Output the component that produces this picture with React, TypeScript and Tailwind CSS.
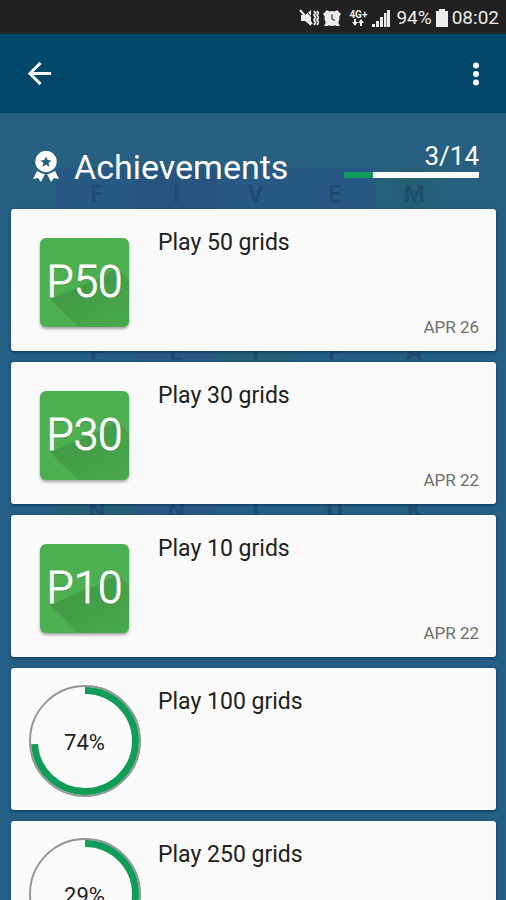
import { MdArrowBack } from 'react-icons/md'

type Achievement = {
  title: string
  date?: string
  badge?: string
  percent?: number
}

const ACHIEVEMENTS: Achievement[] = [
  { title: 'Play 50 grids', badge: 'P50', date: 'APR 26' },
  { title: 'Play 30 grids', badge: 'P30', date: 'APR 22' },
  { title: 'Play 10 grids', badge: 'P10', date: 'APR 22' },
  { title: 'Play 100 grids', percent: 74 },
  { title: 'Play 250 grids', percent: 29 },
]

const BLUE = 'bg-[#285984]'
const GREEN = 'bg-[#245f75]'

const LETTER_ROWS = [
  { letters: 'FIVEM', tints: [BLUE, 'bg-[#27547f]', BLUE, BLUE, 'bg-linear-to-r from-[#27607f] via-[#245f70] to-[#27607f]'] },
  { letters: 'FEIFA', tints: ['', BLUE, GREEN, '', ''] },
  { letters: 'NNIOK', tints: [GREEN, BLUE, '', '', ''] },
]

function StatusBar() {
  return (
    <div className="flex h-[34px] shrink-0 items-center justify-end bg-[#212121] pt-[2px] pr-[7px] text-[19px] text-[#ececec]">
      <svg className="mr-1 h-5 w-5" viewBox="0 0 20 20" fill="currentColor">
        <path d="M2 7h4l6-5v16l-6-5H2z" />
        <path d="M1 2l12 14" stroke="currentColor" strokeWidth="2" />
        <path d="M6 1l8 10" stroke="#212121" strokeWidth="1" />
        <path d="M15 3l1.500 2-1.500 2 1.500 2.500L15 12l1.500 2-1.500 3M18 3l1.500 2L18 7l1.500 2.500L18 12l1.500 2-1.500 3" fill="none" stroke="currentColor" strokeWidth="1.800" />
      </svg>
      <svg className="mr-[7px] h-[18px] w-[18px]" viewBox="0 0 18 18" fill="currentColor">
        <path d="M0 5l4-4 3 2-5 5zM18 5l-4-4-3 2 5 5zM3 13l-2 4h4l2-2zM15 13l2 4h-4l-2-2z" />
        <circle cx="9" cy="9.500" r="7.500" />
        <path d="M9 5.500v4.500l3 1.500" fill="none" stroke="#444" strokeWidth="1.300" />
      </svg>
      <div className="mr-1 flex w-5 flex-col items-center">
        <span className="text-[10px] font-bold leading-[9px]">4G+</span>
        <svg className="h-[7px] w-3" viewBox="0 0 12 7" fill="currentColor">
          <path d="M2 0h2v3h2L3 7 0 3h2zM8 7h2V4h2L9 0 6 4h2z" />
        </svg>
      </div>
      <svg className="mr-[6px] h-[18px] w-[18px]" viewBox="0 0 18 18" fill="currentColor">
        <path d="M0 15h3v3H0zM4 12h3v6H4zM8 8h3v10H8zM12 4h2.500v14H12zM15 1h3v17h-3z" />
      </svg>
      <span>94%</span>
      <svg className="mx-1 h-[18px] w-3" viewBox="0 0 12 18" fill="currentColor">
        <path d="M3 0h6v2h3v16H0V2h3z" />
      </svg>
      <span>08:02</span>
    </div>
  )
}

// Game board that shows through behind the cards
function LetterGrid() {
  return (
    <div aria-hidden="true" className="absolute inset-x-0 top-[41px] flex flex-col gap-[79px] pr-[52px] pl-[57px] text-2xl font-bold text-[#1c4c70]">
      {LETTER_ROWS.map((row) => (
        <div key={row.letters} className="grid h-[79px] grid-cols-5 items-center">
          {row.letters.split('').map((letter, i) => (
            <div key={i} className={`flex h-[52px] items-center justify-center leading-5 ${row.tints[i]}`}>
              {letter}
            </div>
          ))}
        </div>
      ))}
    </div>
  )
}

function RibbonIcon() {
  return (
    <svg className="h-8 w-[28px]" viewBox="0 0 28 32" fill="#fff">
      <path d="M5 20l8 3-4 8-3-4-5 1zM23 20l-8 3 4 8 3-4 5 1z" />
      <circle cx="14" cy="11" r="12" fill="#27607f" />
      <circle cx="14" cy="10.500" r="10.700" />
      <path d="M14 5.500l1.600 3.600 3.900.3-3 2.600 1 3.800-3.500-2.100-3.500 2.100 1-3.800-3-2.600 3.900-.3z" fill="#27607f" />
    </svg>
  )
}

function Badge({ label }: { label: string }) {
  return (
    <div className="relative flex h-[89px] w-[89px] items-center justify-center overflow-hidden rounded-md bg-[#4caf50] shadow-[0_2px_3px_rgba(0,0,0,0.35)]">
      <svg className="absolute inset-0 h-full w-full" viewBox="0 0 89 89">
        <defs>
          <linearGradient id="fade" x1="0.2" y1="0.2" x2="1" y2="1">
            <stop offset="0" stopColor="#3d9441" stopOpacity="0.8" />
            <stop offset="1" stopColor="#3d9441" stopOpacity="0.2" />
          </linearGradient>
        </defs>
        <path d="M10 61L38 89H89V42L77 30 60 40z" fill="url(#fade)" />
      </svg>
      <span className="relative text-[44px] font-light leading-[48px] text-white [-webkit-text-stroke:1px_white] [text-shadow:0_1px_1px_rgba(0,0,0,0.3)]">{label}</span>
    </div>
  )
}

function ProgressRing({ percent }: { percent: number }) {
  return (
    <div className="relative flex h-[112px] w-[112px] items-center justify-center">
      <svg className="absolute inset-0 h-full w-full -rotate-90" viewBox="0 0 112 112" fill="none">
        <circle cx="56" cy="56" r="55" stroke="#969696" strokeWidth="2" />
        <circle cx="56" cy="56" r="50.500" stroke="#0f9d58" strokeWidth="7" pathLength={100} strokeDasharray={`${percent} 100`} />
      </svg>
      <span className="pt-[2px] text-[22px] text-[#212121]">{percent}%</span>
    </div>
  )
}

function AchievementCard({ item }: { item: Achievement }) {
  return (
    <li className="flex min-h-[142px] rounded-[3px] bg-[#fafafa] shadow-[0_1px_3px_rgba(0,35,65,0.7)]">
      <div className="flex w-[147px] shrink-0 items-center justify-center pt-1">
        {item.badge ? <Badge label={item.badge} /> : <ProgressRing percent={item.percent ?? 0} />}
      </div>
      <div className="flex flex-1 flex-col justify-between pt-5 pr-[17px] pb-[14px]">
        <h2 className="text-[23px] leading-7 text-[#212121]">{item.title}</h2>
        {item.date && <p className="self-end text-[17px] leading-5 text-[#6e6e6e]">{item.date}</p>}
      </div>
    </li>
  )
}

export default function App() {
  const done = 3
  const total = 14

  return (
    <div className="flex h-screen flex-col overflow-hidden bg-[#245f85] font-['Roboto',sans-serif]">
      <StatusBar />
      <header className="flex h-[79px] shrink-0 items-center justify-between bg-[#01476b] pr-4 pl-[22px] text-white">
        <button type="button" aria-label="Back">
          <MdArrowBack size={35} />
        </button>
        <button type="button" aria-label="More options" className="px-1">
          <svg className="h-8 w-5" viewBox="0 0 20 32" fill="currentColor">
            <circle cx="10" cy="7.500" r="3" />
            <circle cx="10" cy="16" r="3" />
            <circle cx="10" cy="24.500" r="3" />
          </svg>
        </button>
      </header>
      <main className="relative flex-1 overflow-y-auto bg-linear-to-b from-[#27607f] to-[#245f85] to-30% [scrollbar-width:none]">
        <LetterGrid />
        <div className="relative">
          <div className="flex h-24 items-center justify-between pt-3 pr-[27px] pl-8 text-white">
            <div className="flex items-center gap-[14px]">
              <RibbonIcon />
              <h1 className="text-[34px] leading-8">Achievements</h1>
            </div>
            <div className="flex w-[135px] flex-col items-end pb-4">
              <span className="text-[26px] leading-8">{done}/{total}</span>
              <div className="h-[6px] w-full bg-white">
                <div className="h-full bg-[#0f9d58]" style={{ width: `${(done / total) * 100}%` }} />
              </div>
            </div>
          </div>
          <ul className="flex flex-col gap-[11px] pr-[10px] pl-[11px]">
            {ACHIEVEMENTS.map((item) => <AchievementCard key={item.title} item={item} />)}
          </ul>
        </div>
      </main>
    </div>
  )
}
